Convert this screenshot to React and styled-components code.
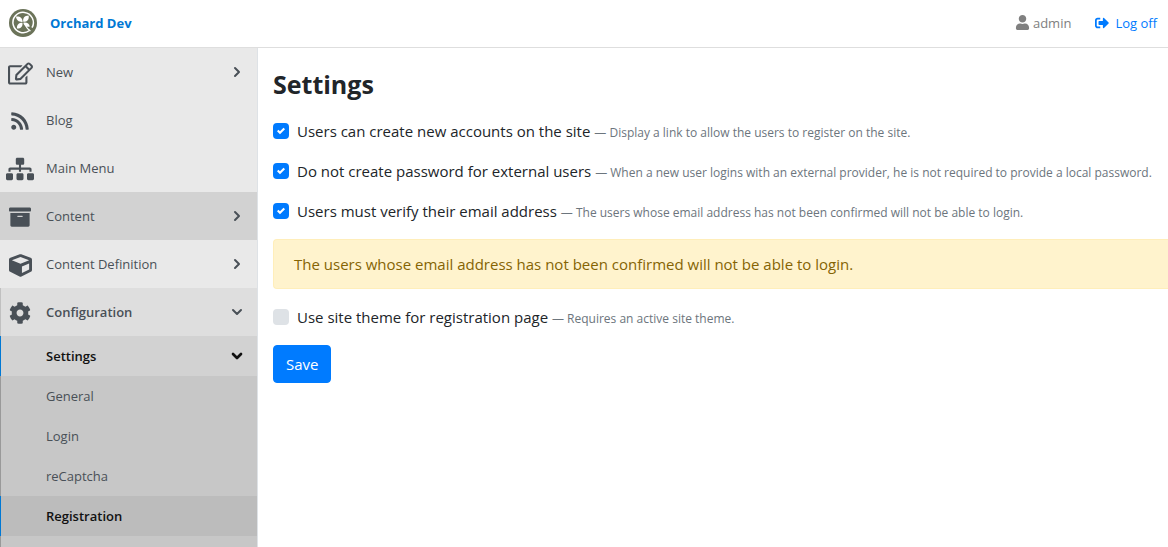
import React, { useState } from 'react';
import styled, { createGlobalStyle } from 'styled-components';
import { ChevronDown, ChevronRight } from 'lucide-react';
import {
  FaArchive,
  FaCog,
  FaCube,
  FaRegEdit,
  FaRss,
  FaSignOutAlt,
  FaSitemap,
  FaUser,
} from 'react-icons/fa';

const menuItems = [
  { text: 'New', icon: FaRegEdit, size: 25, arrow: true },
  { text: 'Blog', icon: FaRss, size: 20 },
  { text: 'Main Menu', icon: FaSitemap, size: 28 },
  { text: 'Content', icon: FaArchive, size: 22, arrow: true, hovered: true },
  { text: 'Content Definition', icon: FaCube, size: 23, arrow: true },
];

const settingsItems = ['General', 'Login', 'reCaptcha', 'Registration'];

const unconfirmedText =
  'The users whose email address has not been confirmed will not be able to login.';

function Logo() {
  return (
    <svg width="28" height="28" viewBox="0 0 28 28" aria-hidden="true">
      <circle cx="14" cy="14" r="14" fill="#6b7359" />
      <path
        d="M20.500 21.500A10.200 10.200 0 1 1 23 18.600"
        fill="none"
        stroke="#fff"
        strokeWidth="1.500"
      />
      <g fill="#fff">
        <path d="M13.500 13C10 13.200 7.200 11.400 7 7.600c4.200-.4 6.700 1.600 6.500 5.400z" />
        <path d="M14.300 12.800c-.8-3.800 1.200-6.200 5.300-6.400.8 3.800-1.200 6.400-5.300 6.400z" />
        <path d="M13.500 13.800c.4 3.800-1.800 6-5.600 5.800-.2-3.800 1.800-5.800 5.600-5.800z" />
        <path d="M14.300 13.700c3.300-.7 5.900.7 6.500 3.700-3.200 1.100-5.700-.3-6.500-3.700z" />
      </g>
      <path d="M16.500 16.500c1 2.200 2.600 4 5 5.400" fill="none" stroke="#fff" strokeWidth="1.200" />
    </svg>
  );
}

function Option({ label, hint, initial }) {
  const [checked, setChecked] = useState(initial);

  return (
    <StOption>
      <StCheck>
        <StCheckbox type="checkbox" checked={checked} onChange={(e) => setChecked(e.target.checked)} />
        {checked && (
          <StTick viewBox="0 0 8 8" aria-hidden="true">
            <path fill="#fff" d="M6.564.75l-3.590 3.612-1.538-1.550L0 4.260 2.974 7.250 8 2.193z" />
          </StTick>
        )}
      </StCheck>
      <span>
        {label} <StHint>— {hint}</StHint>
      </span>
    </StOption>
  );
}

function App() {
  return (
    <>
      <GlobalStyle />
      <StPage>
        <StHeader>
          <StBrand href="#home">
            <Logo />
            Orchard Dev
          </StBrand>
          <StUserNav>
            <StUser>
              <FaUser size={15} />
              admin
            </StUser>
            <StLogoff href="#logoff">
              <FaSignOutAlt size={14} />
              Log off
            </StLogoff>
          </StUserNav>
        </StHeader>
        <StBody>
          <StSidebar>
            {menuItems.map(({ text, icon: Icon, size, arrow, hovered }) => (
              <StMenuItem key={text} href="#menu" $hovered={hovered}>
                <StIcon>
                  <Icon size={size} />
                </StIcon>
                <StText>{text}</StText>
                {arrow && <ChevronRight size={16} strokeWidth={3} />}
              </StMenuItem>
            ))}
            <StConfigItem href="#configuration">
              <StIcon>
                <FaCog size={22} />
              </StIcon>
              <StText>Configuration</StText>
              <ChevronDown size={16} strokeWidth={3} />
            </StConfigItem>
            <StSettingsItem href="#settings">
              <StText>Settings</StText>
              <ChevronDown size={16} strokeWidth={4} />
            </StSettingsItem>
            <StSubmenu>
              {settingsItems.map((text) => (
                <StSubItem key={text} href="#item" $active={text === 'Registration'}>
                  {text}
                </StSubItem>
              ))}
            </StSubmenu>
          </StSidebar>
          <StMain>
            <StTitle>Settings</StTitle>
            <StForm onSubmit={(e) => e.preventDefault()}>
              <Option
                label="Users can create new accounts on the site"
                hint="Display a link to allow the users to register on the site."
                initial
              />
              <Option
                label="Do not create password for external users"
                hint="When a new user logins with an external provider, he is not required to provide a local password."
                initial
              />
              <Option label="Users must verify their email address" hint={unconfirmedText} initial />
              <StAlert role="alert">{unconfirmedText}</StAlert>
              <Option
                label="Use site theme for registration page"
                hint="Requires an active site theme."
                initial={false}
              />
              <StSave type="submit">Save</StSave>
            </StForm>
          </StMain>
        </StBody>
      </StPage>
    </>
  );
}

export default App;

const GlobalStyle = createGlobalStyle`
  * {
    box-sizing: border-box;
  }
  body {
    margin: 0;
    background-color: #fff;
    color: #212529;
    font-family: 'Segoe UI', 'Open Sans', 'Noto Sans', sans-serif;
    font-size: 15px;
    line-height: 24px;
  }
  a {
    text-decoration: none;
  }
`;

const StPage = styled.div`
  display: flex;
  flex-direction: column;
  min-height: 100vh;
`;

const StHeader = styled.header`
  display: flex;
  align-items: center;
  justify-content: space-between;
  height: 48px;
  padding: 0 11px 2px 9px;
  border-bottom: 1px solid #dedede;
`;

const StBrand = styled.a`
  display: flex;
  align-items: center;
  gap: 13px;
  color: #0078d4;
  font-size: 13px;
  font-weight: 700;
`;

const StUserNav = styled.div`
  display: flex;
  gap: 24px;
  font-size: 13px;
`;

const StUser = styled.span`
  display: flex;
  align-items: center;
  gap: 3px;
  color: #808080;
`;

const StLogoff = styled.a`
  display: flex;
  align-items: center;
  gap: 6px;
  color: #007bff;
`;

const StBody = styled.div`
  display: flex;
  flex: 1;
`;

const StSidebar = styled.nav`
  display: flex;
  flex-direction: column;
  flex: 0 0 258px;
  border-right: 1px solid #dee2e6;
  background-color: #e9e9e9;
  font-size: 13px;
`;

const StMenuItem = styled.a`
  display: flex;
  align-items: center;
  height: 48px;
  padding-right: 12px;
  border-left: 1px solid transparent;
  background-color: ${({ $hovered }) => ($hovered ? '#d2d2d2' : 'transparent')};
  color: #495057;
`;

const StConfigItem = styled(StMenuItem)`
  border-left-color: #c0c0c0;
  background-color: #dedede;
  font-weight: 600;
`;

const StSettingsItem = styled(StMenuItem)`
  height: 40px;
  padding-left: 45px;
  border-left-color: #0078d4;
  background-color: #d2d2d2;
  color: #111;
  font-weight: 600;
`;

const StIcon = styled.span`
  display: flex;
  justify-content: center;
  width: 38px;
  margin-right: 7px;
  padding-top: 2px;
`;

const StText = styled.span`
  flex: 1;
`;

const StSubmenu = styled.div`
  display: flex;
  flex-direction: column;
  flex: 1;
  background-color: #c7c7c7;
  box-shadow: inset 1px 0 #999;
`;

const StSubItem = styled.a`
  display: flex;
  align-items: center;
  height: 40px;
  padding-left: 45px;
  border-left: 1px solid ${({ $active }) => ($active ? '#0078d4' : 'transparent')};
  background-color: ${({ $active }) => ($active ? '#bcbcbc' : 'transparent')};
  color: ${({ $active }) => ($active ? '#111' : '#495057')};
  font-weight: ${({ $active }) => ($active ? 600 : 400)};
`;

const StMain = styled.main`
  flex: 1;
  min-width: 0;
  padding: 19px 0 20px 15px;
`;

const StTitle = styled.h1`
  margin: 0 0 18px;
  font-size: 25px;
  font-weight: 700;
  line-height: 34px;
`;

const StForm = styled.form`
  display: flex;
  flex-direction: column;
  gap: 16px;
`;

const StOption = styled.label`
  display: flex;
  align-items: center;
  gap: 8px;
  white-space: nowrap;
`;

const StCheck = styled.span`
  display: grid;
  place-items: center;
`;

const StCheckbox = styled.input`
  grid-area: 1 / 1;
  appearance: none;
  width: 16px;
  height: 16px;
  margin: 0;
  border-radius: 4px;
  background-color: #dee2e6;
  &:checked {
    background-color: #007bff;
  }
`;

const StTick = styled.svg`
  grid-area: 1 / 1;
  width: 8px;
  height: 8px;
  pointer-events: none;
`;

const StHint = styled.small`
  color: #6c757d;
  font-size: 12px;
  line-height: 16px;
`;

const StAlert = styled.div`
  padding: 12px 20px;
  border: 1px solid #ffeeba;
  border-right: none;
  border-radius: 4px 0 0 4px;
  background-color: #fff3cd;
  color: #856404;
`;

const StSave = styled.button`
  align-self: flex-start;
  padding: 6px 12px;
  border: 1px solid #007bff;
  border-radius: 4px;
  background-color: #007bff;
  color: #fff;
  font: inherit;
  cursor: pointer;
`;
